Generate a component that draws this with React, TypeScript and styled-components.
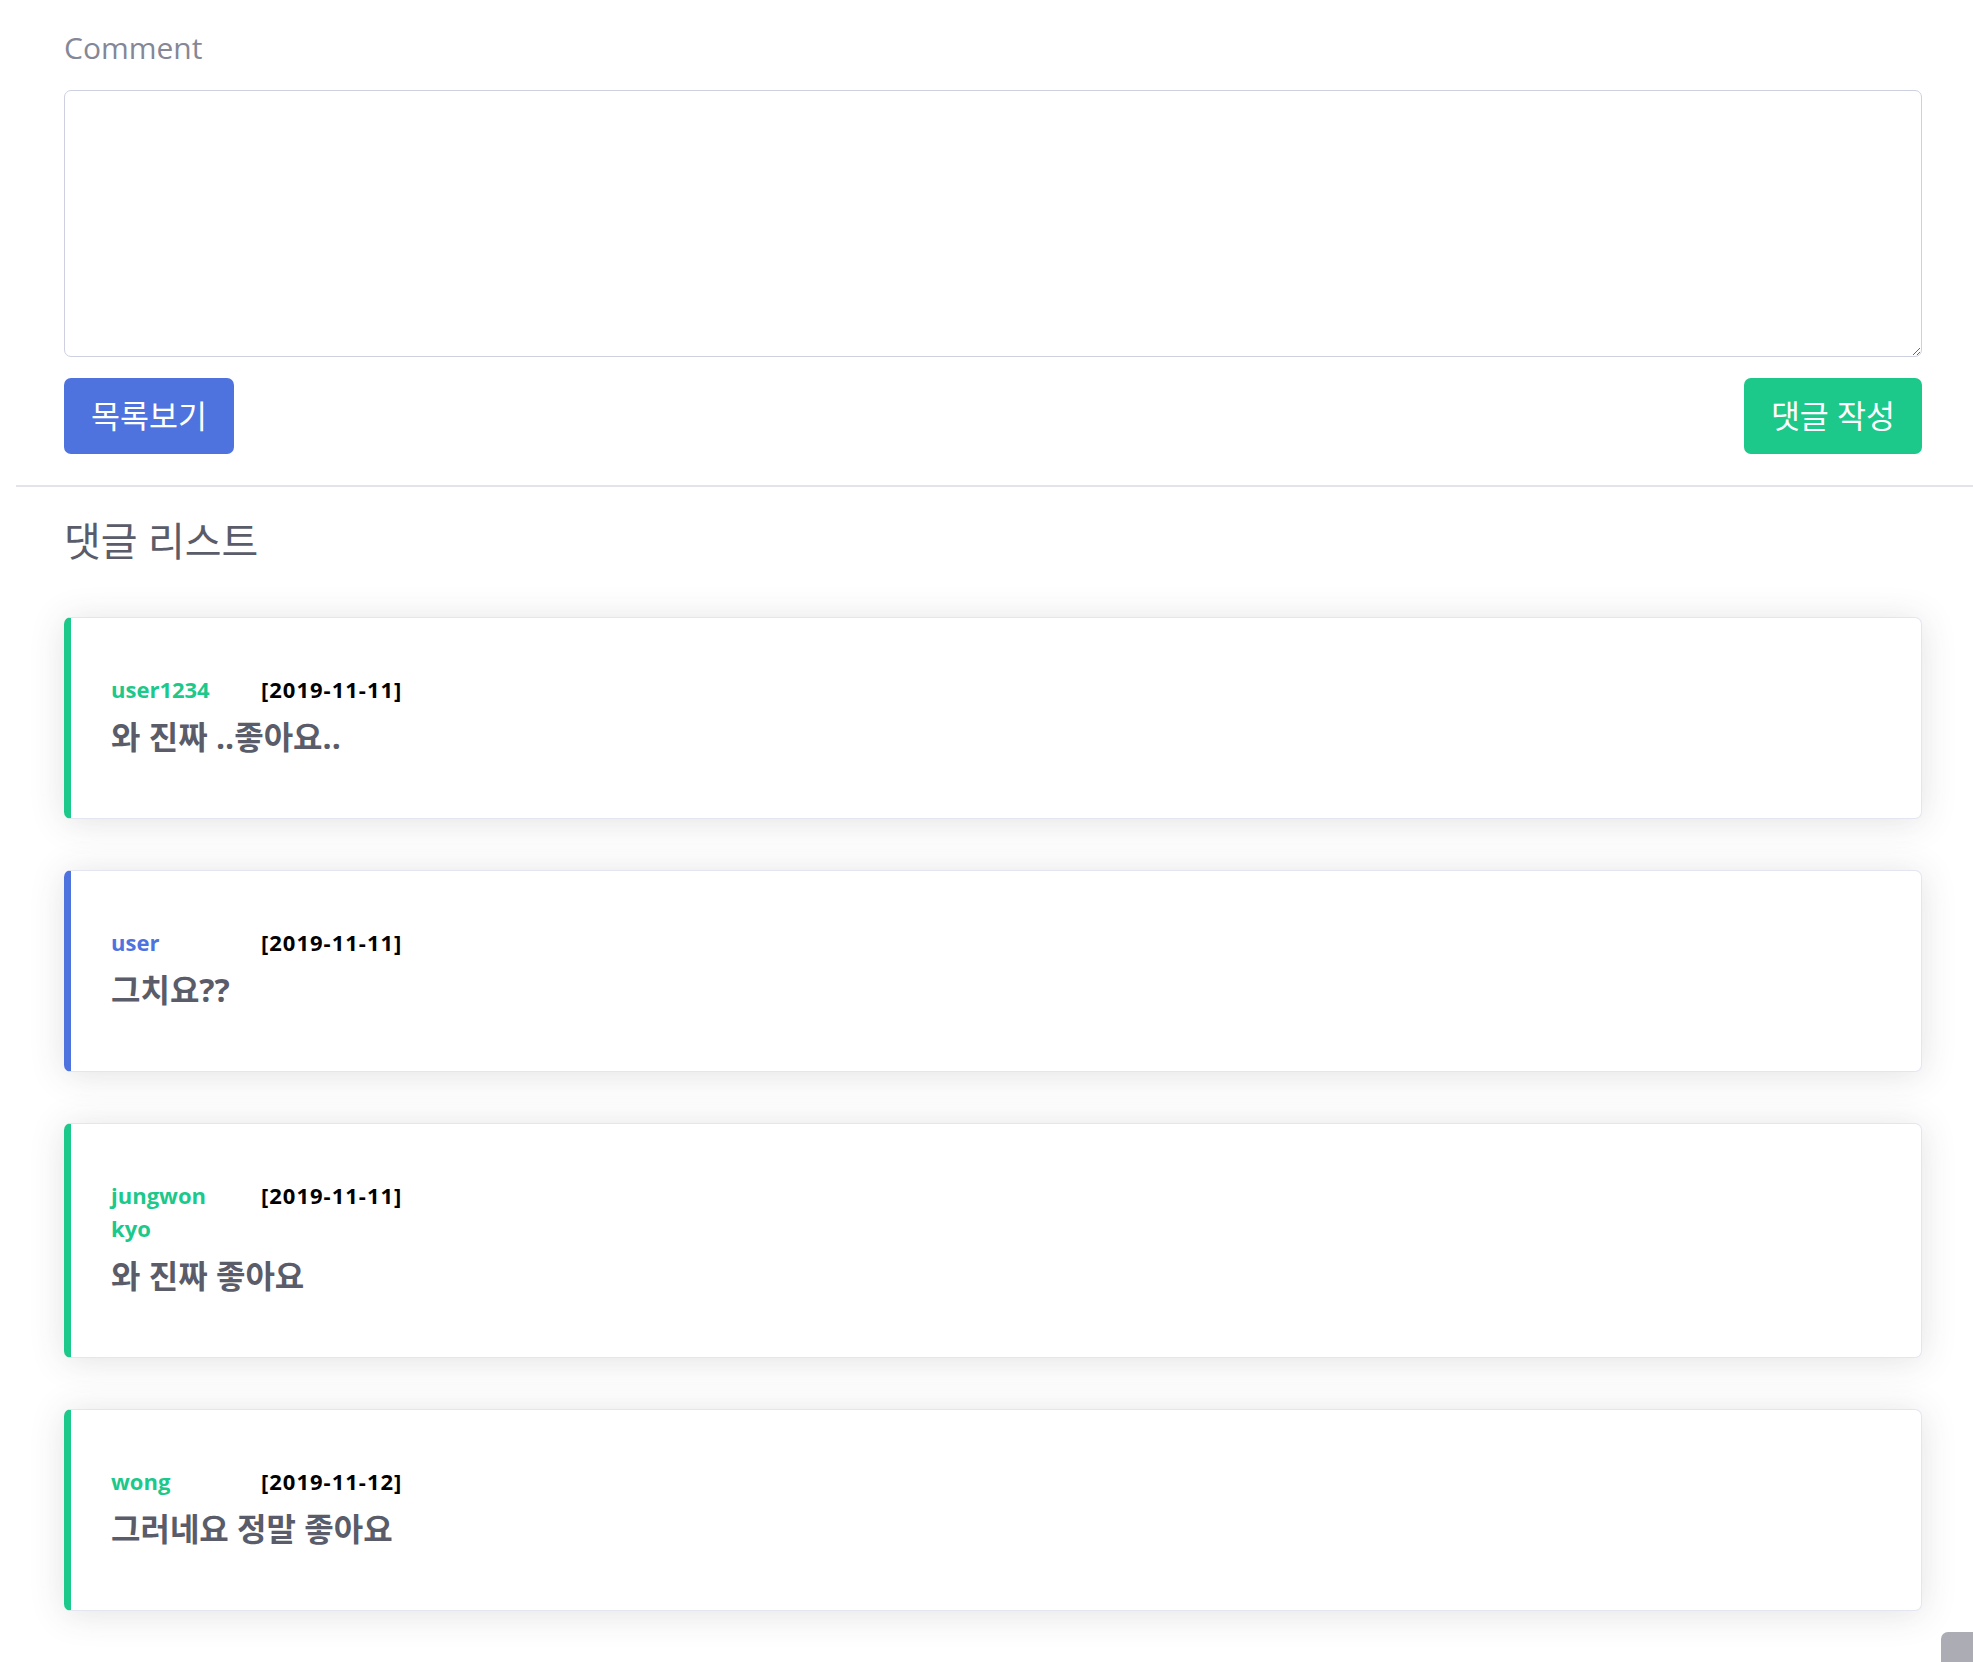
import React from "react";
import styled, { createGlobalStyle } from "styled-components";

const GlobalStyle = createGlobalStyle`
  html, body {
    margin: 0;
    padding: 0;
    background: #ffffff;
  }
  body {
    font-family: "Open Sans", "Noto Sans CJK KR", sans-serif;
    color: #858796;
  }
  * { box-sizing: border-box; }
`;

const Page = styled.div`
  padding: 0 0 0 16px;
  min-height: 1662px;
`;

const Section = styled.div`
  margin: 0 51px 0 48px;
`;

const FormSection = styled(Section)`
  padding-top: 26px;
  display: flex;
  flex-direction: column;
`;

const Label = styled.label`
  font-size: 30px;
  line-height: 44px;
  color: #858796;
  font-weight: 400;
`;

const TextArea = styled.textarea`
  margin-top: 20px;
  display: block;
  width: 100%;
  height: 267px;
  border: 1px solid #cdd0e0;
  border-radius: 7px;
  padding: 10px 15px;
  font-family: inherit;
  font-size: 20px;
  color: #6e707e;
  resize: vertical;
  outline: none;
`;

const ButtonRow = styled.div`
  margin-top: 21px;
  display: flex;
  justify-content: space-between;
  align-items: center;
`;

const Button = styled.button<{ $variant: "primary" | "success" }>`
  height: 76px;
  padding: 0 27px 4px;
  border: none;
  border-radius: 7px;
  font-family: "Open Sans", "Noto Sans CJK KR", sans-serif;
  font-size: 31.5px;
  font-weight: 400;
  color: #ffffff;
  cursor: pointer;
  background: ${(p) => (p.$variant === "primary" ? "#4e73df" : "#1cc88a")};
`;

const Divider = styled.hr`
  margin: 31px 0 0;
  border: none;
  height: 2px;
  background: #e3e4ea;
`;

const ListSection = styled(Section)`
  padding-top: 32px;
`;

const Heading = styled.h2`
  margin: 0;
  font-size: 40px;
  line-height: 44px;
  font-weight: 400;
  color: #5a5c69;
`;

const CardList = styled.div`
  margin-top: 54px;
  display: flex;
  flex-direction: column;
  gap: 51px;
`;

const Card = styled.div<{ $accent: string }>`
  background: #ffffff;
  border: 1px solid #e3e6f0;
  border-left: 7px solid ${(p) => p.$accent};
  border-radius: 7px;
  box-shadow: 0 3px 35px 0 rgba(58, 59, 69, 0.15);
  padding: 55px 40px 52px 40px;
`;

const MetaRow = styled.div`
  display: grid;
  grid-template-columns: 120px auto;
  column-gap: 30px;
  justify-content: start;
  align-items: start;
`;

const UserName = styled.span<{ $color: string }>`
  font-size: 22px;
  line-height: 33px;
  font-weight: 700;
  color: ${(p) => p.$color};
`;

const DateText = styled.span`
  font-size: 22px;
  line-height: 33px;
  font-weight: 700;
  letter-spacing: 1px;
  color: #000000;
`;

const CommentText = styled.h4`
  margin: 13px 0 12px;
  font-size: 32px;
  line-height: 35px;
  font-weight: 700;
  color: #5a5c69;
`;

const ScrollTop = styled.a`
  position: fixed;
  left: 1941px;
  top: 1632px;
  width: 55px;
  height: 55px;
  border-radius: 7px;
  background: rgba(90, 92, 105, 0.5);
`;

type Comment = {
  user: string;
  date: string;
  text: string;
  color: string;
};

const GREEN = "#1cc88a";
const BLUE = "#4e73df";

const comments: Comment[] = [
  { user: "user1234", date: "[2019-11-11]", text: "와 진짜 ..좋아요..", color: GREEN },
  { user: "user", date: "[2019-11-11]", text: "그치요??", color: BLUE },
  { user: "jungwon kyo", date: "[2019-11-11]", text: "와 진짜 좋아요", color: GREEN },
  { user: "wong", date: "[2019-11-12]", text: "그러네요 정말 좋아요", color: GREEN },
];

export default function App() {
  return (
    <>
      <GlobalStyle />
      <Page>
        <FormSection>
          <Label htmlFor="comment">Comment</Label>
          <TextArea id="comment" />
          <ButtonRow>
            <Button $variant="primary">목록보기</Button>
            <Button $variant="success">댓글 작성</Button>
          </ButtonRow>
        </FormSection>
        <Divider />
        <ListSection>
          <Heading>댓글 리스트</Heading>
          <CardList>
            {comments.map((c, i) => (
              <Card key={i} $accent={c.color}>
                <MetaRow>
                  <UserName $color={c.color}>{c.user}</UserName>
                  <DateText>{c.date}</DateText>
                </MetaRow>
                <CommentText>{c.text}</CommentText>
              </Card>
            ))}
          </CardList>
        </ListSection>
        <ScrollTop href="#" aria-label="scroll to top" />
      </Page>
    </>
  );
}
